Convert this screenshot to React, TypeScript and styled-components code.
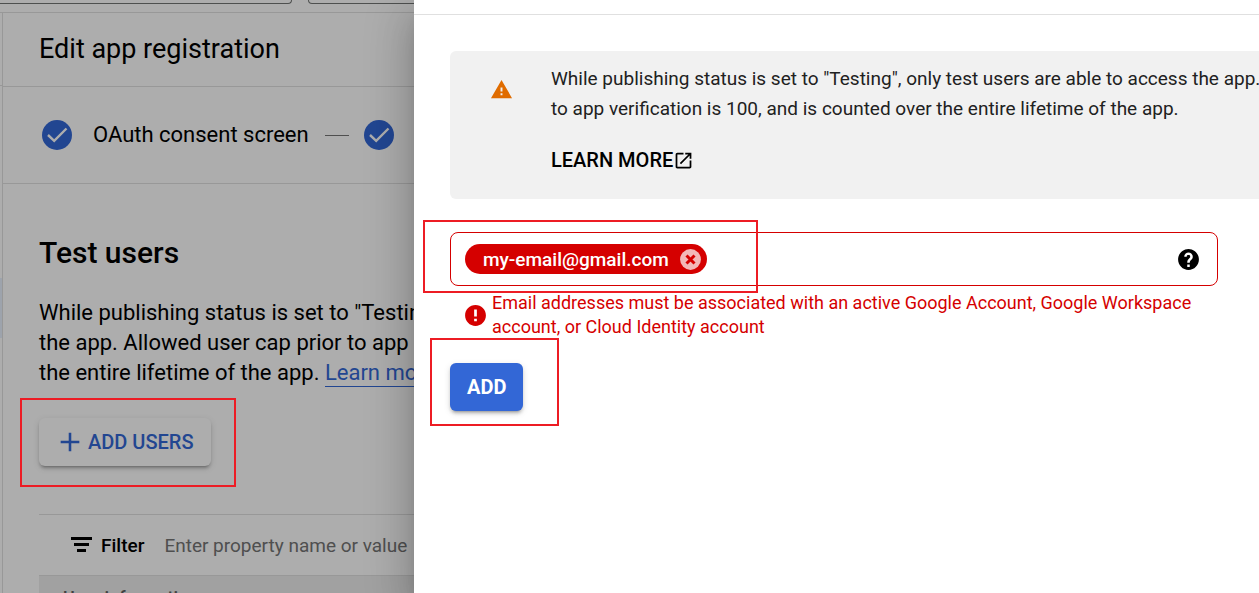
import React from "react";
import styled, { createGlobalStyle } from "styled-components";

const GlobalStyle = createGlobalStyle`
  *, *::before, *::after { box-sizing: border-box; }
  html, body { margin: 0; height: 100%; }
  body {
    font-family: Roboto, "Liberation Sans", Arial, sans-serif;
    color: #000;
    background: #fff;
    overflow: hidden;
  }
  #root { height: 100%; }
  h1, h2, p { margin: 0; font-weight: 400; }
  button, input { font-family: inherit; }
`;

const Shell = styled.div`
  display: grid;
  grid-template-columns: 414px minmax(0, 1fr);
  height: 100vh;
  overflow: hidden;
`;

/* ---------- dimmed page ---------- */

const Page = styled.div`
  position: relative;
  display: flex;
  flex-direction: column;
  min-width: 0;
  overflow: hidden;
  white-space: nowrap;
`;

const Scrim = styled.div`
  position: absolute;
  inset: 0;
  background: rgba(0, 0, 0, 0.32);
`;

const TopBar = styled.div`
  display: flex;
  gap: 16px;
  flex: none;
  height: 13px;
  border-bottom: 1px solid #e0e0e0;
`;

const TopBox = styled.div<{ $first?: boolean }>`
  flex: none;
  width: ${(p) => (p.$first ? 292 : 400)}px;
  height: 4px;
  border: 1px solid #747775;
  border-top: 0;
  border-left-width: ${(p) => (p.$first ? 0 : 1)}px;
  border-radius: ${(p) => (p.$first ? "0 0 6px 0" : "0 0 6px 6px")};
`;

const Body = styled.div`
  display: flex;
  flex: 1;
  min-height: 0;
`;

const Rail = styled.nav`
  flex: none;
  width: 3px;
  border-right: 1px solid #e0e0e0;
`;

const RailTitle = styled.div`
  height: 73px;
  border-bottom: 1px solid #e0e0e0;
`;

const RailItem = styled.div`
  height: 60px;
  margin-top: 192px;
  background: #e8f0fe;
`;

const Main = styled.main`
  flex: 1;
  min-width: 0;
`;

const TitleBar = styled.header`
  display: flex;
  align-items: center;
  height: 74px;
  padding: 0 0 2px 36px;
  border-bottom: 1px solid #e0e0e0;
`;

const Title = styled.h1`
  font-size: 27px;
  line-height: 36px;
`;

const Stepper = styled.div`
  display: flex;
  align-items: center;
  height: 97px;
  padding-left: 36px;
  border-bottom: 1px solid #e0e0e0;
`;

const StepLabel = styled.span`
  margin: 0 16px 0 18px;
  font-size: 22px;
  line-height: 30px;
`;

const StepLine = styled.span`
  width: 24px;
  height: 1px;
  margin-right: 12px;
  background: #757575;
`;

const Section = styled.section`
  display: flex;
  flex-direction: column;
  align-items: flex-start;
  padding: 48px 0 0 36px;
`;

const Heading = styled.h2`
  font-size: 30px;
  font-weight: 500;
  line-height: 42px;
  margin-bottom: 24px;
`;

const Intro = styled.p`
  font-size: 22px;
  line-height: 30px;
`;

const Line = styled.span`
  display: block;
`;

const IntroLink = styled.a`
  display: inline-block;
  color: #3367d6;
  line-height: 26px;
  border-bottom: 1px solid #3367d6;
  text-decoration: none;
`;

const ButtonSlot = styled.div`
  position: relative;
  display: flex;
  margin-top: 30px;
`;

const Frame = styled.span<{ $top: number; $right: number; $bottom: number; $left: number }>`
  position: absolute;
  inset: ${(p) => `${-p.$top}px ${-p.$right}px ${-p.$bottom}px ${-p.$left}px`};
  border: 2px solid #ed1c24;
  pointer-events: none;
  z-index: 2;
`;

const RaisedButton = styled.button<{ $primary?: boolean }>`
  display: flex;
  align-items: center;
  justify-content: center;
  height: 48px;
  padding: 0 17px;
  border: 0;
  border-radius: 6px;
  background: ${(p) => (p.$primary ? "#3367d6" : "#fff")};
  color: ${(p) => (p.$primary ? "#fff" : "#3367d6")};
  font-size: 20px;
  font-weight: ${(p) => (p.$primary ? 700 : 500)};
  box-shadow: 0 4px 2px -3px rgba(0, 0, 0, 0.2), 0 3px 3px rgba(0, 0, 0, 0.14),
    0 2px 7px rgba(0, 0, 0, 0.12);
  svg { margin-right: 4px; }
`;

const FilterBar = styled.div`
  display: flex;
  align-items: center;
  align-self: stretch;
  height: 61px;
  margin-top: 48px;
  padding-left: 28px;
  border-top: 1px solid #e0e0e0;
`;

const FilterLabel = styled.label`
  display: flex;
  align-items: center;
  flex: none;
  gap: 6px;
  font-size: 19px;
  font-weight: 500;
`;

const FilterInput = styled.input`
  flex: none;
  width: 320px;
  margin-left: 20px;
  padding: 0;
  border: 0;
  outline: 0;
  background: transparent;
  font-size: 19px;
  &::placeholder { color: #757575; opacity: 1; }
`;

const Table = styled.table`
  align-self: stretch;
  border-collapse: collapse;
`;

const HeadCell = styled.th`
  height: 44px;
  padding: 0 24px;
  border-top: 1px solid #e0e0e0;
  background: #eee;
  color: #616161;
  font-size: 18px;
  font-weight: 500;
  text-align: left;
`;

/* ---------- drawer ---------- */

const Drawer = styled.aside`
  position: relative;
  z-index: 1;
  display: flex;
  flex-direction: column;
  min-width: 0;
  background: #fff;
  box-shadow: 0 12px 15px -8px rgba(0, 0, 0, 0.2), 0 24px 36px 3px rgba(0, 0, 0, 0.14),
    0 9px 45px 8px rgba(0, 0, 0, 0.12);
`;

const DrawerTop = styled.div`
  height: 15px;
  border-bottom: 1px solid #e0e0e0;
`;

const DrawerBody = styled.div`
  display: flex;
  flex-direction: column;
  align-items: flex-start;
  padding: 36px 0 0 36px;
`;

const Notice = styled.div`
  display: flex;
  align-self: stretch;
  height: 148px;
  padding: 13px 0 0 40px;
  border-radius: 6px 0 0 6px;
  background: #f1f1f1;
  overflow: hidden;
  white-space: nowrap;
`;

const NoticeIcon = styled.span`
  flex: none;
  width: 61px;
  padding-top: 14px;
`;

const NoticeText = styled.div`
  font-size: 19px;
  line-height: 30px;
  color: #212121;
`;

const LearnMore = styled.a`
  display: inline-flex;
  align-items: center;
  margin-top: 21px;
  color: #000;
  font-size: 20px;
  font-weight: 500;
  text-decoration: none;
`;

const Form = styled.form`
  display: flex;
  flex-direction: column;
  align-items: flex-start;
  width: calc(100% - 36px);
  max-width: 768px;
  margin-top: 33px;
`;

const Field = styled.div`
  display: flex;
  align-items: center;
  align-self: stretch;
  height: 54px;
  padding: 0 16px 0 14px;
  border: 1px solid #d50000;
  border-radius: 8px;
`;

const ChipSlot = styled.div`
  position: relative;
  flex: none;
`;

const Chip = styled.span`
  display: flex;
  align-items: center;
  gap: 9px;
  height: 30px;
  padding: 0 4px 0 18px;
  border-radius: 15px;
  background: #d50000;
  color: #fff;
  font-size: 19px;
  font-weight: 500;
`;

const IconButton = styled.button`
  display: flex;
  flex: none;
  padding: 0;
  border: 0;
  background: none;
  color: inherit;
`;

const EmailInput = styled.input`
  flex: 1;
  min-width: 0;
  height: 36px;
  padding: 0 8px;
  border: 0;
  outline: 0;
  background: transparent;
  font-size: 19px;
`;

const ErrorRow = styled.div`
  display: flex;
  align-items: center;
  gap: 4px;
  margin-top: 5px;
  padding-left: 13px;
  color: #d50000;
  font-size: 18px;
  line-height: 24px;
  svg { flex: none; }
`;

const AddSlot = styled(ButtonSlot)`
  margin-top: 24px;
`;

/* ---------- icons ---------- */

type IconProps = { d: string; size?: number; color?: string };

const Icon = ({ d, size = 24, color = "currentColor" }: IconProps) => (
  <svg width={size} height={size} viewBox="0 0 24 24" fill={color} aria-hidden="true" display="block">
    <path d={d} />
  </svg>
);

const PLUS = "M20 13.1h-6.900v6.900h-2.200v-6.900H4v-2.200h6.900V4h2.200v6.900H20z";
const WARNING = "M1 21h22L12 2 1 21zm12-3h-2v-2h2v2zm0-4h-2v-4h2v4z";
const ERROR = "M12 2C6.48 2 2 6.48 2 12s4.48 10 10 10 10-4.48 10-10S17.52 2 12 2zm1.300 15.600h-2.600V15h2.600v2.600zm0-4.600h-2.600V6.200h2.600V13z";
const HELP =
  "M12 2C6.48 2 2 6.48 2 12s4.48 10 10 10 10-4.48 10-10S17.52 2 12 2zm1.200 17.200h-2.400v-2.400h2.400v2.400zm2.200-7.700l-.9.92C13.65 13.200 13.200 13.700 13.200 15.200h-2.400v-.6c0-1.200.45-2.200 1.17-2.930l1.240-1.260c.3-.3.45-.7.45-1.150 0-.95-.75-1.700-1.660-1.700s-1.700.75-1.700 1.700H7.900c0-2.250 1.850-4.100 4.100-4.100s4.100 1.850 4.100 4.100c0 .9-.2 1.700-.7 2.240z";
const OPEN =
  "M19 19H5V5h7V3H5c-1.11 0-2 .9-2 2v14c0 1.1.89 2 2 2h14c1.1 0 2-.9 2-2v-7h-2v7zM14 3v2h3.59l-9.83 9.83 1.41 1.41L19 6.41V10h2V3h-7z";

const CheckCircle = () => (
  <svg width="36" height="36" viewBox="0 0 36 36" aria-hidden="true" display="block">
    <circle cx="18" cy="18" r="15" fill="#3367d6" />
    <path d="M9 18l6.200 5.800L27.500 11.500" fill="none" stroke="#fff" strokeWidth="2.400" />
  </svg>
);

const FilterGlyph = () => (
  <svg width="28" height="24" viewBox="0 0 28 24" aria-hidden="true" display="block">
    <path d="M4 4h21v3H4zM7 10h15v3H7zM10 16h9v3h-9z" />
  </svg>
);

const ChipClose = () => (
  <svg width="25" height="25" viewBox="0 0 25 25" aria-hidden="true" display="block">
    <circle cx="12.500" cy="12.500" r="10.400" fill="#fff" fillOpacity="0.72" />
    <path d="M8.500 8.500l8 8M16.500 8.500l-8 8" stroke="#d50000" strokeWidth="3" />
  </svg>
);

export default function App() {
  return (
    <>
      <GlobalStyle />
      <Shell>
        <Page>
          <TopBar>
            <TopBox $first />
            <TopBox />
          </TopBar>
          <Body>
            <Rail>
              <RailTitle />
              <RailItem />
            </Rail>
            <Main>
              <TitleBar>
                <Title>Edit app registration</Title>
              </TitleBar>
              <Stepper>
                <CheckCircle />
                <StepLabel>OAuth consent screen</StepLabel>
                <StepLine />
                <CheckCircle />
              </Stepper>
              <Section>
                <Heading>Test users</Heading>
                <Intro>
                  <Line>While publishing status is set to "Testing",</Line>
                  <Line>the app. Allowed user cap prior to app</Line>
                  <Line>
                    the entire lifetime of the app. <IntroLink href="#learn">Learn more</IntroLink>
                  </Line>
                </Intro>
                <ButtonSlot>
                  <RaisedButton type="button">
                    <Icon d={PLUS} size={28} />
                    ADD USERS
                  </RaisedButton>
                  <Frame $top={20} $right={25} $bottom={21} $left={19} />
                </ButtonSlot>
                <FilterBar>
                  <FilterLabel htmlFor="filter">
                    <FilterGlyph />
                    Filter
                  </FilterLabel>
                  <FilterInput id="filter" placeholder="Enter property name or value" />
                </FilterBar>
                <Table>
                  <thead>
                    <tr>
                      <HeadCell scope="col">User information</HeadCell>
                    </tr>
                  </thead>
                </Table>
              </Section>
            </Main>
          </Body>
          <Scrim />
        </Page>

        <Drawer>
          <DrawerTop />
          <DrawerBody>
            <Notice>
              <NoticeIcon>
                <Icon d={WARNING} size={23} color="#e06c00" />
              </NoticeIcon>
              <NoticeText>
                <Line>While publishing status is set to "Testing", only test users are able to access the app.</Line>
                <Line>to app verification is 100, and is counted over the entire lifetime of the app.</Line>
                <LearnMore href="#learn-more">
                  LEARN MORE
                  <Icon d={OPEN} size={21} />
                </LearnMore>
              </NoticeText>
            </Notice>
            <Form onSubmit={(e) => e.preventDefault()}>
              <Field>
                <ChipSlot>
                  <Chip>
                    my-email@gmail.com
                    <IconButton type="button" aria-label="Remove my-email@gmail.com">
                      <ChipClose />
                    </IconButton>
                  </Chip>
                  <Frame $top={24} $right={51} $bottom={19} $left={42} />
                </ChipSlot>
                <EmailInput type="email" aria-label="Email addresses" aria-describedby="email-error" />
                <IconButton type="button" aria-label="Help">
                  <Icon d={HELP} size={25} color="#000" />
                </IconButton>
              </Field>
              <ErrorRow id="email-error">
                <Icon d={ERROR} size={25} />
                <span>
                  Email addresses must be associated with an active Google Account, Google Workspace account, or
                  Cloud Identity account
                </span>
              </ErrorRow>
              <AddSlot>
                <RaisedButton type="submit" $primary>
                  ADD
                </RaisedButton>
                <Frame $top={25} $right={36} $bottom={15} $left={20} />
              </AddSlot>
            </Form>
          </DrawerBody>
        </Drawer>
      </Shell>
    </>
  );
}
